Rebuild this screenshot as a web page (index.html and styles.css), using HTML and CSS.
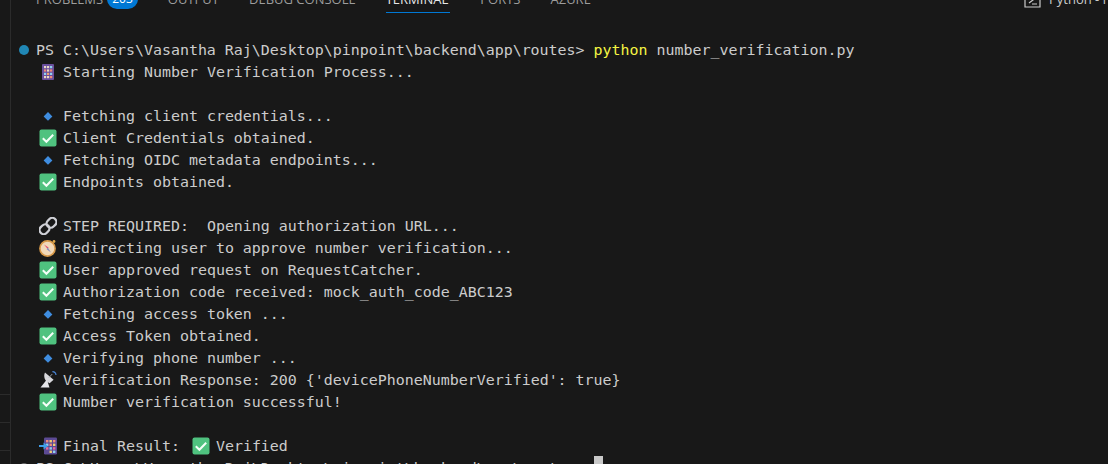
FILE: index.html
```html
<!DOCTYPE html>
<html lang="en">
<head>
<meta charset="utf-8">
<title>Terminal</title>
<link rel="stylesheet" href="styles.css">
</head>
<body>
<svg class="defs" width="0" height="0" aria-hidden="true">
  <symbol id="check" viewBox="0 0 18 18">
    <rect x="0.5" y="0.5" width="17" height="17" rx="2" fill="#4fc27f"/>
    <path d="M3.8 9.3l3.6 3.5 6.8-7" fill="none" stroke="#f4fff8" stroke-width="2"/>
  </symbol>
  <symbol id="diamond" viewBox="0 0 18 18">
    <path d="M9 5l4.4 4.4L9 13.8 4.6 9.4z" fill="#3f8de0"/>
  </symbol>
  <symbol id="abacus" viewBox="0 0 18 18">
    <rect x="3" y="1" width="12" height="16" rx="1" fill="#6a4f9c"/>
    <g fill="#e9d9c8"><rect x="5" y="3" width="2.2" height="2.2"/><rect x="8" y="3" width="2.2" height="2.2"/><rect x="11" y="3" width="2.2" height="2.2" fill="#8fd0ee"/></g>
    <g fill="#f08a7a"><rect x="5" y="6.4" width="2.2" height="2.2"/><rect x="8" y="6.4" width="2.2" height="2.2" fill="#eed9c0"/><rect x="11" y="6.4" width="2.2" height="2.2"/></g>
    <g fill="#8fd0ee"><rect x="5" y="9.8" width="2.2" height="2.2"/><rect x="8" y="9.8" width="2.2" height="2.2" fill="#f0a070"/><rect x="11" y="9.8" width="2.2" height="2.2"/></g>
    <g fill="#eed9c0"><rect x="5" y="13" width="2.2" height="2.2"/><rect x="8" y="13" width="2.2" height="2.2"/><rect x="11" y="13" width="2.2" height="2.2" fill="#f08a7a"/></g>
  </symbol>
  <symbol id="link" viewBox="0 0 18 18">
    <g fill="none" stroke="#cfd0d6" stroke-width="2.3">
      <rect x="8.4" y="0.6" width="8.2" height="10.4" rx="4" transform="rotate(45 12.5 5.8)"/>
      <rect x="1.4" y="7" width="8.2" height="10.4" rx="4" transform="rotate(45 5.5 12.2)"/>
    </g>
  </symbol>
  <symbol id="compass" viewBox="0 0 18 18">
    <circle cx="8.5" cy="9.5" r="7.6" fill="#f2d9b8" stroke="#d99a4a" stroke-width="1.6"/>
    <circle cx="15" cy="2.5" r="1.4" fill="#e0a84a"/>
    <path d="M5 5.5l4.6 3-1 1.6z" fill="#e8506a"/>
    <path d="M12 13.5L7.6 10.2l1.2-1.6z" fill="#8a8fc0"/>
  </symbol>
  <symbol id="dish" viewBox="0 0 18 18">
    <path d="M6 1.5c-1.8 4-.6 8.6 4.6 10.8l4-3.6z" fill="#d8d8dc"/>
    <path d="M7.5 9L1.5 16.5h9L8.6 10.4z" fill="#e6e6ea"/>
    <path d="M10 6.5l3.2-3.4" stroke="#9aa0a8" stroke-width="1"/>
    <path d="M13.4 .6c1.6 0 3.4 1.4 3.6 3.4" fill="none" stroke="#4a86d8" stroke-width="1.2"/>
  </symbol>
  <symbol id="incoming" viewBox="0 0 18 18">
    <rect x="5" y="0.5" width="13" height="17" rx="1.2" fill="#5c4a94"/>
    <g fill="#f08a7a"><rect x="7" y="3" width="2.4" height="2.4"/><rect x="10.5" y="3" width="2.4" height="2.4" fill="#efd070"/><rect x="14" y="3" width="2.4" height="2.4"/></g>
    <g fill="#8fd0ee"><rect x="7" y="6.6" width="2.4" height="2.4"/><rect x="10.5" y="6.6" width="2.4" height="2.4" fill="#f08a7a"/><rect x="14" y="6.6" width="2.4" height="2.4" fill="#efd070"/></g>
    <g fill="#e86a9a"><rect x="7" y="10.2" width="2.4" height="2.4"/><rect x="10.5" y="10.2" width="2.4" height="2.4" fill="#8fd0ee"/><rect x="14" y="10.2" width="2.4" height="2.4"/></g>
    <g fill="#efd070"><rect x="10.5" y="13.6" width="2.4" height="2.4"/><rect x="14" y="13.6" width="2.4" height="2.4" fill="#8fd0ee"/></g>
    <path d="M0 8h4.5V5.5L9 9l-4.5 3.5V10H0z" fill="#3f9de8"/>
  </symbol>
</svg>
<div class="window">
  <aside class="rail">
    <div class="rail-space"></div>
    <div class="rail-row"></div>
    <div class="rail-row"></div>
    <div class="rail-row rail-last"></div>
  </aside>
  <main class="panel">
    <nav class="tabs">
      <span class="tab">PROBLEMS<span class="badge">203</span></span>
      <span class="tab">OUTPUT</span>
      <span class="tab">DEBUG CONSOLE</span>
      <span class="tab tab-active">TERMINAL</span>
      <span class="tab">PORTS</span>
      <span class="tab">AZURE</span>
      <span class="shell">
        <svg class="shell-icon" width="17" height="17" viewBox="0 0 17 17"><path d="M1 1h15v15H1z" fill="none" stroke="#cccccc" stroke-width="1.2"/><path d="M5 6l4 3-4 3M8 13h5" fill="none" stroke="#cccccc" stroke-width="1.2"/></svg>
        <span>Python - routes</span>
      </span>
    </nav>
    <section class="term">
      <div class="line"><span class="mark mark-blue"></span>PS C:\Users\Vasantha Raj\Desktop\pinpoint\backend\app\routes&gt; <span class="cmd">python</span> number_verification.py</div>
      <div class="line"><span class="emo"><svg><use href="#abacus"/></svg></span>Starting Number Verification Process...</div>
      <div class="line"></div>
      <div class="line"><span class="emo"><svg><use href="#diamond"/></svg></span>Fetching client credentials...</div>
      <div class="line"><span class="emo"><svg><use href="#check"/></svg></span>Client Credentials obtained.</div>
      <div class="line"><span class="emo"><svg><use href="#diamond"/></svg></span>Fetching OIDC metadata endpoints...</div>
      <div class="line"><span class="emo"><svg><use href="#check"/></svg></span>Endpoints obtained.</div>
      <div class="line"></div>
      <div class="line"><span class="emo"><svg><use href="#link"/></svg></span>STEP REQUIRED:  Opening authorization URL...</div>
      <div class="line"><span class="emo"><svg><use href="#compass"/></svg></span>Redirecting user to approve number verification...</div>
      <div class="line"><span class="emo"><svg><use href="#check"/></svg></span>User approved request on RequestCatcher.</div>
      <div class="line"><span class="emo"><svg><use href="#check"/></svg></span>Authorization code received: mock_auth_code_ABC123</div>
      <div class="line"><span class="emo"><svg><use href="#diamond"/></svg></span>Fetching access token ...</div>
      <div class="line"><span class="emo"><svg><use href="#check"/></svg></span>Access Token obtained.</div>
      <div class="line"><span class="emo"><svg><use href="#diamond"/></svg></span>Verifying phone number ...</div>
      <div class="line"><span class="emo"><svg><use href="#dish"/></svg></span>Verification Response: 200 {'devicePhoneNumberVerified': true}</div>
      <div class="line"><span class="emo"><svg><use href="#check"/></svg></span>Number verification successful!</div>
      <div class="line"></div>
      <div class="line"><span class="emo"><svg><use href="#incoming"/></svg></span>Final Result: <span class="emo"><svg><use href="#check"/></svg></span>Verified</div>
      <div class="line"><span class="mark mark-grey"></span>PS C:\Users\Vasantha Raj\Desktop\pinpoint\backend\app\routes&gt; <span class="cursor"></span></div>
    </section>
  </main>
</div>
</body>
</html>
```

FILE: styles.css
```css
* { box-sizing: border-box; }
html, body { margin: 0; height: 464px; overflow: hidden; background: #181818; }
.defs { position: absolute; }
.window { display: flex; height: 464px; width: 1108px; overflow: hidden; }
.rail { flex: 0 0 11px; display: flex; flex-direction: column; border-right: 1px solid #2b2b2b; }
.rail-space { flex: 1; }
.rail-row { height: 28px; border-top: 1px solid #2b2b2b; }
.rail-last { height: 14px; }
.panel { flex: 1; min-width: 0; display: flex; flex-direction: column; overflow: hidden; }
.tabs { flex: 0 0 13px; height: 13px; min-height: 0; display: flex; align-items: flex-end; padding-left: 25px; gap: 30px; font-family: "Open Sans", sans-serif; font-size: 13px; color: #9d9d9d; }
.tab { flex: none; display: flex; align-items: center; height: 24px; padding-bottom: 4px; line-height: 16px; white-space: nowrap; }
.tab-active { color: #e7e7e7; border-bottom: 1px solid #0078d4; padding-left: 0; padding-right: 2px; }
.badge { margin-left: 4px; padding: 0 5px; height: 20px; line-height: 20px; border-radius: 10px; background: #0078d4; color: #fff; font-size: 12px; }
.shell { flex: 0 0 auto; margin-left: auto; width: 84px; height: 24px; display: flex; align-items: center; gap: 8px; padding-bottom: 4px; color: #cccccc; white-space: nowrap; overflow: hidden; }
.shell-icon { flex: none; }
.term { padding-top: 26px; font-family: "DejaVu Sans Mono", monospace; font-size: 14.95px; color: #cccccc; }
.line { position: relative; height: 22px; line-height: 22px; padding-left: 25px; white-space: pre; }
.mark { position: absolute; left: 8px; top: 6px; width: 10px; height: 10px; border-radius: 50%; }
.mark-blue { background: #2087b5; }
.mark-grey { background: #6b6b6b; }
.cmd { color: #f5f543; }
.emo { display: inline-block; width: 27px; height: 18px; padding-left: 3px; vertical-align: -4px; }
.emo svg { display: block; width: 18px; height: 18px; }
.cursor { display: inline-block; width: 9px; height: 22px; background: #c8c8c8; vertical-align: top; margin-top: -1px; }
```
